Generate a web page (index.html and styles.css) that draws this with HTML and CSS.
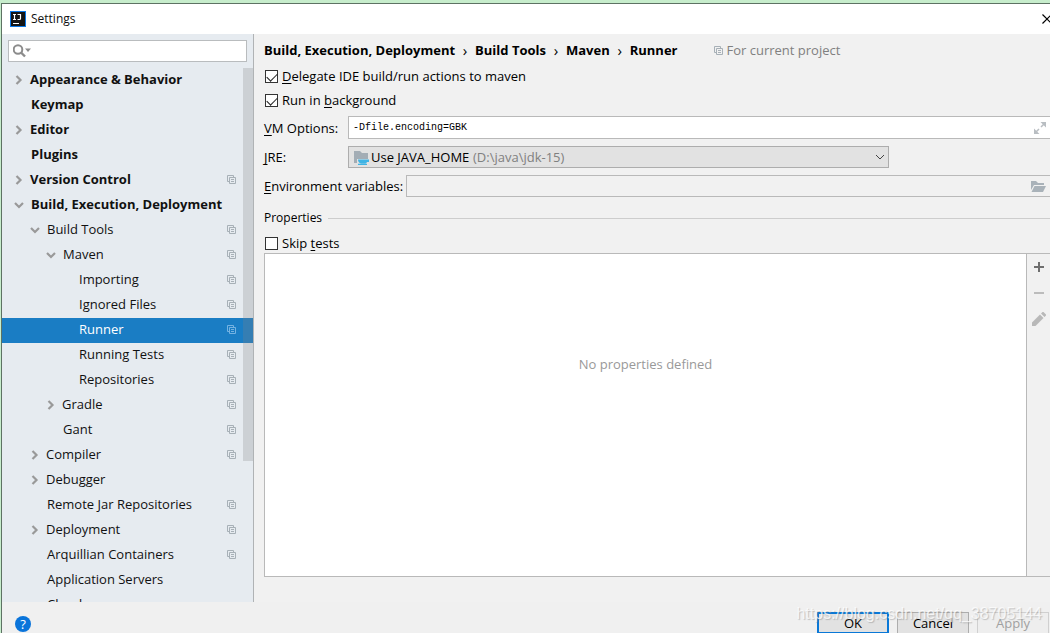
FILE: index.html
```html
<!DOCTYPE html>
<html lang="en">
<head>
<meta charset="utf-8">
<title>Settings</title>
<link rel="stylesheet" href="styles.css">
</head>
<body>
<svg class="defs" aria-hidden="true">
  <symbol id="right" viewBox="0 0 10 10"><path d="M2.500 1 6.500 5 2.500 9" fill="none" stroke="currentColor" stroke-width="2.200"/></symbol>
  <symbol id="down" viewBox="0 0 10 10"><path d="M1 3 5 7 9 3" fill="none" stroke="currentColor" stroke-width="2.200"/></symbol>
  <symbol id="copy" viewBox="0 0 9 9"><path d="M2.500 6.500H.5V.5h6v2M2.500 2.500h6v6h-6zM4 4.500h3M4 6.500h3" fill="none" stroke="currentColor"/></symbol>
</svg>
<div class="window">
  <header class="titlebar">
    <svg class="logo" viewBox="0 0 16 16"><path fill="#0a78e8" d="M0 0h16v16H0z"/><path fill="#151515" d="M1 1h14v14H1z"/><path d="M3 3.500h3M4.500 3.500v5M3 8.500h3M7.500 3.500h3v4q0 1-1 1H7.500M3 12.500h6" fill="none" stroke="#fff" stroke-width="1.200"/></svg>
    <h1 class="title">Settings</h1>
    <button class="close" aria-label="Close"><svg width="10" height="10" viewBox="0 0 10 10"><path d="M.5.5l9 9M9.500.5l-9 9" stroke="#000" stroke-width="1.200"/></svg></button>
  </header>
  <div class="body">
    <aside class="sidebar">
      <div class="search">
        <svg width="20" height="14" viewBox="0 0 20 14"><circle cx="5" cy="5.500" r="4.300" fill="none" stroke="#8c8c8c" stroke-width="2"/><path d="M8 8.500l4 4" stroke="#8c8c8c" stroke-width="2.400"/><path d="M12 4.500h6l-3 3.500z" fill="#8c8c8c"/></svg>
        <input type="text" aria-label="Search settings">
      </div>
      <ul class="tree">
        <li class="row top"><svg class="arrow"><use href="#right"/></svg><span>Appearance &amp; Behavior</span></li>
        <li class="row top leaf"><span>Keymap</span></li>
        <li class="row top"><svg class="arrow"><use href="#right"/></svg><span>Editor</span></li>
        <li class="row top leaf"><span>Plugins</span></li>
        <li class="row top"><svg class="arrow"><use href="#right"/></svg><span>Version Control</span><svg class="copy"><use href="#copy"/></svg></li>
        <li class="row top open"><svg class="arrow"><use href="#down"/></svg><span>Build, Execution, Deployment</span></li>
        <li class="row l1 open"><svg class="arrow"><use href="#down"/></svg><span>Build Tools</span><svg class="copy"><use href="#copy"/></svg></li>
        <li class="row l2 open"><svg class="arrow"><use href="#down"/></svg><span>Maven</span><svg class="copy"><use href="#copy"/></svg></li>
        <li class="row l3 leaf"><span>Importing</span><svg class="copy"><use href="#copy"/></svg></li>
        <li class="row l3 leaf"><span>Ignored Files</span><svg class="copy"><use href="#copy"/></svg></li>
        <li class="row l3 leaf selected"><span>Runner</span><svg class="copy"><use href="#copy"/></svg></li>
        <li class="row l3 leaf"><span>Running Tests</span><svg class="copy"><use href="#copy"/></svg></li>
        <li class="row l3 leaf"><span>Repositories</span><svg class="copy"><use href="#copy"/></svg></li>
        <li class="row l2"><svg class="arrow"><use href="#right"/></svg><span>Gradle</span><svg class="copy"><use href="#copy"/></svg></li>
        <li class="row l2 leaf"><span>Gant</span><svg class="copy"><use href="#copy"/></svg></li>
        <li class="row l1"><svg class="arrow"><use href="#right"/></svg><span>Compiler</span><svg class="copy"><use href="#copy"/></svg></li>
        <li class="row l1"><svg class="arrow"><use href="#right"/></svg><span>Debugger</span></li>
        <li class="row l1 leaf"><span>Remote Jar Repositories</span><svg class="copy"><use href="#copy"/></svg></li>
        <li class="row l1"><svg class="arrow"><use href="#right"/></svg><span>Deployment</span><svg class="copy"><use href="#copy"/></svg></li>
        <li class="row l1 leaf"><span>Arquillian Containers</span><svg class="copy"><use href="#copy"/></svg></li>
        <li class="row l1 leaf"><span>Application Servers</span></li>
        <li class="row l1 leaf"><span>Clouds</span></li>
      </ul>
      <div class="scrollbar"></div>
    </aside>
    <main class="main">
      <nav class="crumbs">
        <b>Build, Execution, Deployment</b><i>›</i><b>Build Tools</b><i>›</i><b>Maven</b><i>›</i><b>Runner</b>
        <span class="scope"><svg class="copy"><use href="#copy"/></svg>For current project</span>
      </nav>
      <label class="check"><input type="checkbox" checked><span><u>D</u>elegate IDE build/run actions to maven</span></label>
      <label class="check"><input type="checkbox" checked><span>Run in <u>b</u>ackground</span></label>
      <div class="field">
        <label class="name" for="vm"><u>V</u>M Options:</label>
        <div class="box white">
          <input id="vm" class="mono" type="text" value="-Dfile.encoding=GBK">
          <svg width="12" height="12" viewBox="0 0 12 12" fill="#b9bec2" stroke="#b9bec2"><path stroke="none" d="M6.500 0H12v5.500zM0 6.500V12h5.500z"/><path d="M7 5l3-3M5 7l-3 3" stroke-width="1.500"/></svg>
        </div>
      </div>
      <div class="field">
        <label class="name" for="jre"><u>J</u>RE:</label>
        <div class="combo">
          <select id="jre"><option>Use JAVA_HOME</option></select>
          <svg class="folder" width="16" height="14" viewBox="0 0 16 14"><path fill="#a3adb5" d="M0 0h6l2 2h6v10H0z"/><path fill="#e2e2e2" d="M3 8h12v6H3z"/><path fill="#3fb4e5" d="M4 8.500h11v2.500h-2q-.5 1-1.500 1.500H7Q4 11.500 4 8.500zM4 12.800h9V14H4z"/></svg>
          <span class="path">(D:\java\jdk-15)</span>
          <svg class="caret" width="10" height="6" viewBox="0 0 10 6"><path d="M1 1l4 4 4-4" fill="none" stroke="#444"/></svg>
        </div>
      </div>
      <div class="field">
        <label class="envname" for="env"><u>E</u>nvironment variables:</label>
        <div class="box">
          <input id="env" type="text">
          <svg width="15" height="11" viewBox="0 0 15 11" fill="#a9b2b9"><path d="M0 0h5l2 2h6v2H3L0 9z"/><path d="M3.500 5H15l-3 6H.5z"/></svg>
        </div>
      </div>
      <h2 class="section">Properties</h2>
      <label class="check skip"><input type="checkbox"><span>Skip <u>t</u>ests</span></label>
      <section class="table">
        <p class="empty">No properties defined</p>
        <div class="tools">
          <button aria-label="Add"><svg width="12" height="12" viewBox="0 0 12 12"><path d="M6 1v10M1 6h10" stroke="#6e6e6e" stroke-width="2"/></svg></button>
          <button aria-label="Remove" disabled><svg width="12" height="12" viewBox="0 0 12 12"><path d="M1 6h10" stroke="#bcbcbc" stroke-width="2"/></svg></button>
          <button aria-label="Edit" disabled><svg width="14" height="14" viewBox="0 0 14 14" fill="#b8b8b8"><path d="M0 14v-3.500L8 2.500 11.500 6l-8 8zM9 1.500 10.500 0h1L14 2.500v1L12.500 5z"/></svg></button>
        </div>
      </section>
    </main>
  </div>
  <footer class="footer">
    <button class="help" aria-label="Help">?</button>
    <button class="btn ok">OK</button>
    <button class="btn">Cancel</button>
    <button class="btn" disabled>Apply</button>
    <span class="watermark">https://blog.csdn.net/qq_38705144</span>
  </footer>
</div>
</body>
</html>
```
FILE: styles.css
```css
* { box-sizing: border-box; }
body {
  margin: 0;
  height: 100vh;
  padding: 3px 0 0 1px;
  overflow: hidden;
  background: #c7edcc;
  font: 13px/18px "Open Sans", "Noto Sans", sans-serif;
  color: #111;
}
input, button, select { font: inherit; color: inherit; margin: 0; }
button { padding: 0; border: 0; background: none; }
u { text-underline-offset: 2px; }
.defs { position: absolute; width: 0; height: 0; }

.window {
  display: flex;
  flex-direction: column;
  height: 100%;
  border: solid #5d7263;
  border-width: 1px 0 0 1px;
  background: #f1f1f1;
}
.titlebar {
  display: flex;
  align-items: center;
  height: 30px;
  flex: none;
  padding-left: 8px;
  background: #fff;
}
.logo { width: 16px; height: 16px; }
.title { margin: 0 auto 0 5px; font-size: 12px; font-weight: 400; }
.close { display: flex; width: 8px; overflow: hidden; }
.close svg { flex: none; }

.body { display: flex; flex: 1; min-height: 0; }
.sidebar {
  position: relative;
  width: 252px;
  flex: none;
  overflow: hidden;
  padding-top: 6px;
  border-right: 1px solid #b0b3b5;
  background: #e6ebf0;
}
.search {
  display: flex;
  align-items: center;
  height: 22px;
  margin: 0 6px;
  padding-left: 4px;
  border: 1px solid #b9bcbe;
  background: #fff;
}
.search input { flex: 1; min-width: 0; border: 0; outline: 0; background: none; }
.tree { margin: 6px 0 0; padding: 0; list-style: none; }
.row {
  display: flex;
  align-items: center;
  height: 25px;
  padding: 0 17px 2px 12px;
  white-space: nowrap;
}
.row span { padding-bottom: 2px; }
.top { font-weight: 700; }
.l1 { padding-left: 28px; }
.l2 { padding-left: 44px; }
.l3 { padding-left: 60px; }
.leaf span { margin-left: 17px; }
.arrow { width: 10px; height: 10px; margin-right: 6px; color: #999; }
.open .arrow { margin-right: 7px; }
.copy { width: 9px; height: 9px; margin-left: auto; color: #a7b0b7; }
.selected { background: #1a7dc4; color: #fff; }
.selected .copy { color: #75b3e2; }
.scrollbar {
  position: absolute;
  top: 34px;
  right: 0;
  width: 10px;
  height: 393px;
  background: rgba(130, 130, 130, .26);
}

.main {
  display: flex;
  flex-direction: column;
  flex: 1;
  min-width: 0;
  padding: 7px 0 25px 10px;
  color: #000;
}
.crumbs { display: flex; align-items: center; height: 18px; margin-bottom: 5px; white-space: nowrap; }
.crumbs i { width: 20px; text-align: center; font-style: normal; font-size: 15px; }
.scope { display: flex; align-items: center; gap: 4px; margin-left: 36px; color: #808080; }
.check { display: flex; align-items: center; gap: 4px; height: 24px; }
.check input {
  appearance: none;
  width: 13px;
  height: 13px;
  margin-left: 1px;
  border: 1px solid #333;
  background: #fff;
}
.check input:checked::after {
  content: "";
  display: block;
  width: 9px;
  height: 5px;
  margin: 2px 1px;
  border: solid #222;
  border-width: 0 0 1px 1px;
  transform: rotate(-45deg);
}
.field { display: flex; align-items: center; margin-bottom: 7px; }
.check + .field { margin-top: 4px; }
.name { width: 84px; }
.envname { width: 142px; white-space: nowrap; }
.box {
  display: flex;
  align-items: center;
  flex: 1;
  min-width: 0;
  height: 22px;
  padding: 0 4px;
  border: 1px solid #b9b9b9;
  border-right: 0;
}
.box input { flex: 1; min-width: 0; padding: 0; border: 0; outline: 0; background: none; }
.box .mono { font-family: "Liberation Mono", monospace; font-size: 10px; }
.white { height: 23px; background: #fff; }
.combo { position: relative; width: 541px; height: 22px; }
.combo select {
  appearance: none;
  width: 100%;
  height: 100%;
  padding: 0 22px;
  border: 1px solid #adadad;
  border-radius: 0;
  background: #e2e2e2;
}
.folder, .path, .caret { position: absolute; pointer-events: none; }
.folder { left: 6px; top: 5px; }
.path { left: 125px; top: 2px; color: #808080; }
.caret { right: 4px; top: 8px; }
.section {
  display: flex;
  align-items: center;
  gap: 6px;
  margin: 5px 0 4px;
  font-size: 12px;
  font-weight: 400;
}
.section::after { content: ""; flex: 1; height: 1px; background: #cdcdcd; }
.skip { flex: none; height: 20px; margin-top: 2px; }
.table {
  display: flex;
  flex: 1;
  border: 1px solid #b9b9b9;
  border-right: 0;
}
.empty {
  flex: 1;
  margin: 0;
  padding-top: 101px;
  background: #fff;
  color: #999;
  text-align: center;
}
.tools { width: 24px; border-left: 1px solid #b9b9b9; }
.tools button { display: flex; align-items: center; justify-content: center; width: 100%; height: 26px; }

.footer {
  position: relative;
  display: flex;
  align-items: flex-start;
  gap: 8px;
  height: 31px;
  flex: none;
  padding: 10px 1px 0 13px;
  background: #f0f0f0;
}
.help {
  width: 16px;
  height: 16px;
  margin: 4px auto 0 0;
  border-radius: 50%;
  background: #0a74da;
  color: #fff;
  font-size: 13px;
  line-height: 16px;
}
.btn { width: 72px; height: 22px; border: 1px solid #adadad; background: #e2e2e2; color: #000; line-height: 16px; }
.ok { border: 2px solid #0a78d7; }
.btn:disabled { border-color: #d0d0d0; background: #eee; color: #a0a0a0; }
.watermark {
  position: absolute;
  right: 8px;
  top: 3px;
  color: rgba(255, 255, 255, .75);
  font-family: "Liberation Sans", sans-serif;
  font-size: 16px;
  text-shadow: 1px 1px 1px rgba(120, 120, 120, .4);
}
```
